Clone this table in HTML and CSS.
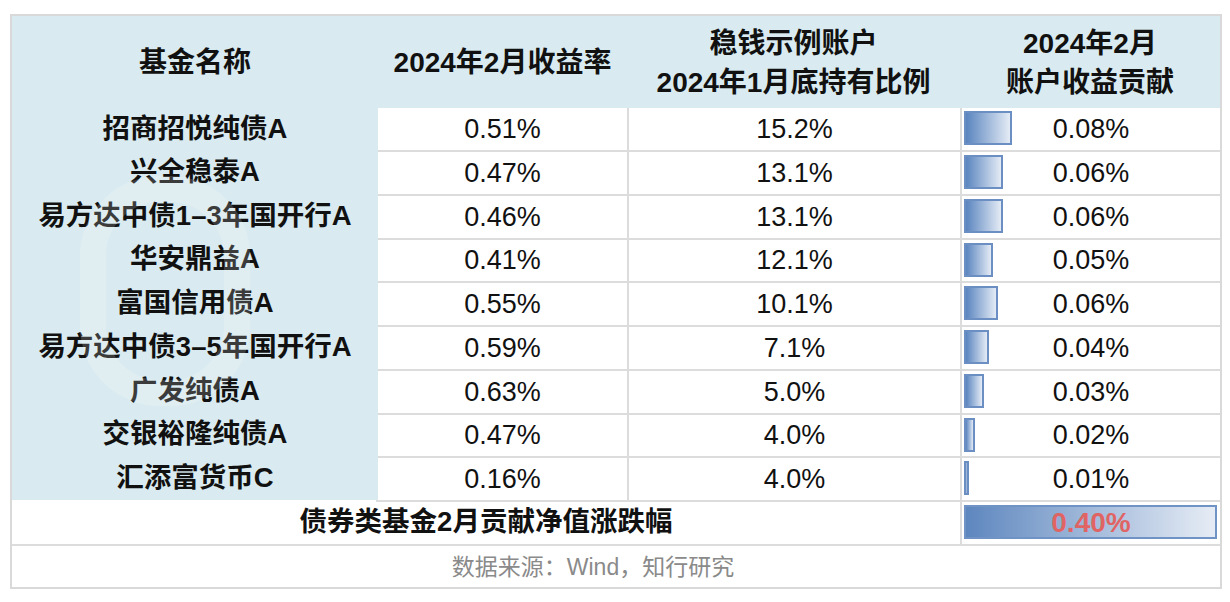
FILE: index.html
```html
<!DOCTYPE html>
<html lang="zh-CN">
<head>
<meta charset="utf-8">
<title>债券类基金2月贡献</title>
<link rel="stylesheet" href="styles.css">
</head>
<body>
<div class="table">
  <div class="watermark" aria-hidden="true">
    <span class="wm-logo"></span>
  </div>

  <div class="head">
    <div class="hcell">基金名称</div>
    <div class="hcell">2024年2月收益率</div>
    <div class="hcell">稳钱示例账户<br>2024年1月底持有比例</div>
    <div class="hcell">2024年2月<br>账户收益贡献</div>
  </div>

  <div class="row first">
    <div class="name">招商招悦纯债A</div>
    <div class="cell">0.51%</div>
    <div class="cell c3">15.2%</div>
    <div class="cell c4"><span class="bar" style="width:48px"></span><span class="val">0.08%</span></div>
  </div>
  <div class="row">
    <div class="name">兴全稳泰A</div>
    <div class="cell">0.47%</div>
    <div class="cell c3">13.1%</div>
    <div class="cell c4"><span class="bar" style="width:39px"></span><span class="val">0.06%</span></div>
  </div>
  <div class="row">
    <div class="name">易方达中债1–3年国开行A</div>
    <div class="cell">0.46%</div>
    <div class="cell c3">13.1%</div>
    <div class="cell c4"><span class="bar" style="width:39px"></span><span class="val">0.06%</span></div>
  </div>
  <div class="row">
    <div class="name">华安鼎益A</div>
    <div class="cell">0.41%</div>
    <div class="cell c3">12.1%</div>
    <div class="cell c4"><span class="bar" style="width:29px"></span><span class="val">0.05%</span></div>
  </div>
  <div class="row">
    <div class="name">富国信用债A</div>
    <div class="cell">0.55%</div>
    <div class="cell c3">10.1%</div>
    <div class="cell c4"><span class="bar" style="width:34px"></span><span class="val">0.06%</span></div>
  </div>
  <div class="row">
    <div class="name">易方达中债3–5年国开行A</div>
    <div class="cell">0.59%</div>
    <div class="cell c3">7.1%</div>
    <div class="cell c4"><span class="bar" style="width:25px"></span><span class="val">0.04%</span></div>
  </div>
  <div class="row">
    <div class="name">广发纯债A</div>
    <div class="cell">0.63%</div>
    <div class="cell c3">5.0%</div>
    <div class="cell c4"><span class="bar" style="width:20px"></span><span class="val">0.03%</span></div>
  </div>
  <div class="row">
    <div class="name">交银裕隆纯债A</div>
    <div class="cell">0.47%</div>
    <div class="cell c3">4.0%</div>
    <div class="cell c4"><span class="bar" style="width:11px"></span><span class="val">0.02%</span></div>
  </div>
  <div class="row">
    <div class="name">汇添富货币C</div>
    <div class="cell">0.16%</div>
    <div class="cell c3">4.0%</div>
    <div class="cell c4"><span class="bar" style="width:5px"></span><span class="val">0.01%</span></div>
  </div>

  <div class="total">
    <div class="total-label">债券类基金2月贡献净值涨跌幅</div>
    <div class="total-cell"><span class="bar total-bar"></span><span class="val red">0.40%</span></div>
  </div>

  <div class="source">数据来源：Wind，知行研究</div>
</div>
</body>
</html>
```

FILE: styles.css
```css
html, body {
  margin: 0;
  padding: 0;
  background: #ffffff;
}

body {
  font-family: "Liberation Sans", "Noto Sans CJK SC", sans-serif;
  color: #111111;
}

.table {
  position: relative;
  box-sizing: border-box;
  width: 1212px;
  margin: 14px 0 0 10px;
  border: 2px solid #d9d9d9;
  background: #ffffff;
  overflow: hidden;
}

.head,
.row {
  display: grid;
  grid-template-columns: 366px 249px 333px 260px;
}

.head {
  height: 92px;
  background: #d9ebf0;
}

.hcell {
  display: flex;
  align-items: center;
  justify-content: center;
  text-align: center;
  font-weight: 700;
  font-size: 28px;
  line-height: 39px;
  padding-top: 1px;
}

.row {
  height: 43.75px;
}

.row.first {
  height: 42px;
}

.name {
  background: #d9ebf0;
  display: flex;
  align-items: center;
  justify-content: center;
  font-weight: 700;
  font-size: 27.5px;
  line-height: 30px;
}

.cell {
  box-sizing: border-box;
  display: flex;
  align-items: center;
  justify-content: center;
  border-top: 2px solid #dcdcdc;
  font-size: 27px;
  line-height: 30px;
  position: relative;
}

.row.first .cell {
  border-top: none;
}

.c3,
.c4 {
  border-left: 2px solid #dcdcdc;
}

.bar {
  position: absolute;
  left: 2px;
  top: 3px;
  height: 34px;
  box-sizing: border-box;
  border: 2px solid #6b8fc3;
  background: linear-gradient(to right, #5a85bf, #e4ebf5);
}

.val {
  position: relative;
}

.total {
  display: grid;
  grid-template-columns: 948px 260px;
  height: 44px;
}

.total-label {
  display: flex;
  align-items: center;
  justify-content: center;
  font-weight: 700;
  font-size: 27.5px;
  line-height: 30px;
  background: linear-gradient(#dcdcdc, #dcdcdc) right top / 584px 2px no-repeat;
}

.total-cell {
  position: relative;
  box-sizing: border-box;
  display: flex;
  align-items: center;
  justify-content: center;
  border-top: 2px solid #dcdcdc;
  border-left: 2px solid #dcdcdc;
  font-size: 28px;
  line-height: 30px;
}

.total-bar {
  left: 2px;
  right: 3px;
  top: 3px;
  height: 34px;
  border-color: #6f93c4;
  background: linear-gradient(to right, #5e87bf, #e6ecf5);
}

.red {
  color: #e06464;
  font-weight: 700;
}

.source {
  box-sizing: border-box;
  height: 43px;
  border-top: 2px solid #dcdcdc;
  display: flex;
  align-items: center;
  justify-content: center;
  padding-right: 46px;
  font-size: 23px;
  line-height: 28px;
  color: #8a8a8a;
}

.watermark {
  position: absolute;
  left: 0;
  top: 0;
  width: 100%;
  height: 100%;
  pointer-events: none;
  z-index: 2;
}

.wm-logo {
  position: absolute;
  left: 68px;
  top: 160px;
  width: 170px;
  height: 230px;
  box-sizing: border-box;
  border: 26px solid rgba(255, 255, 255, 0.18);
  border-radius: 80px;
}
```
